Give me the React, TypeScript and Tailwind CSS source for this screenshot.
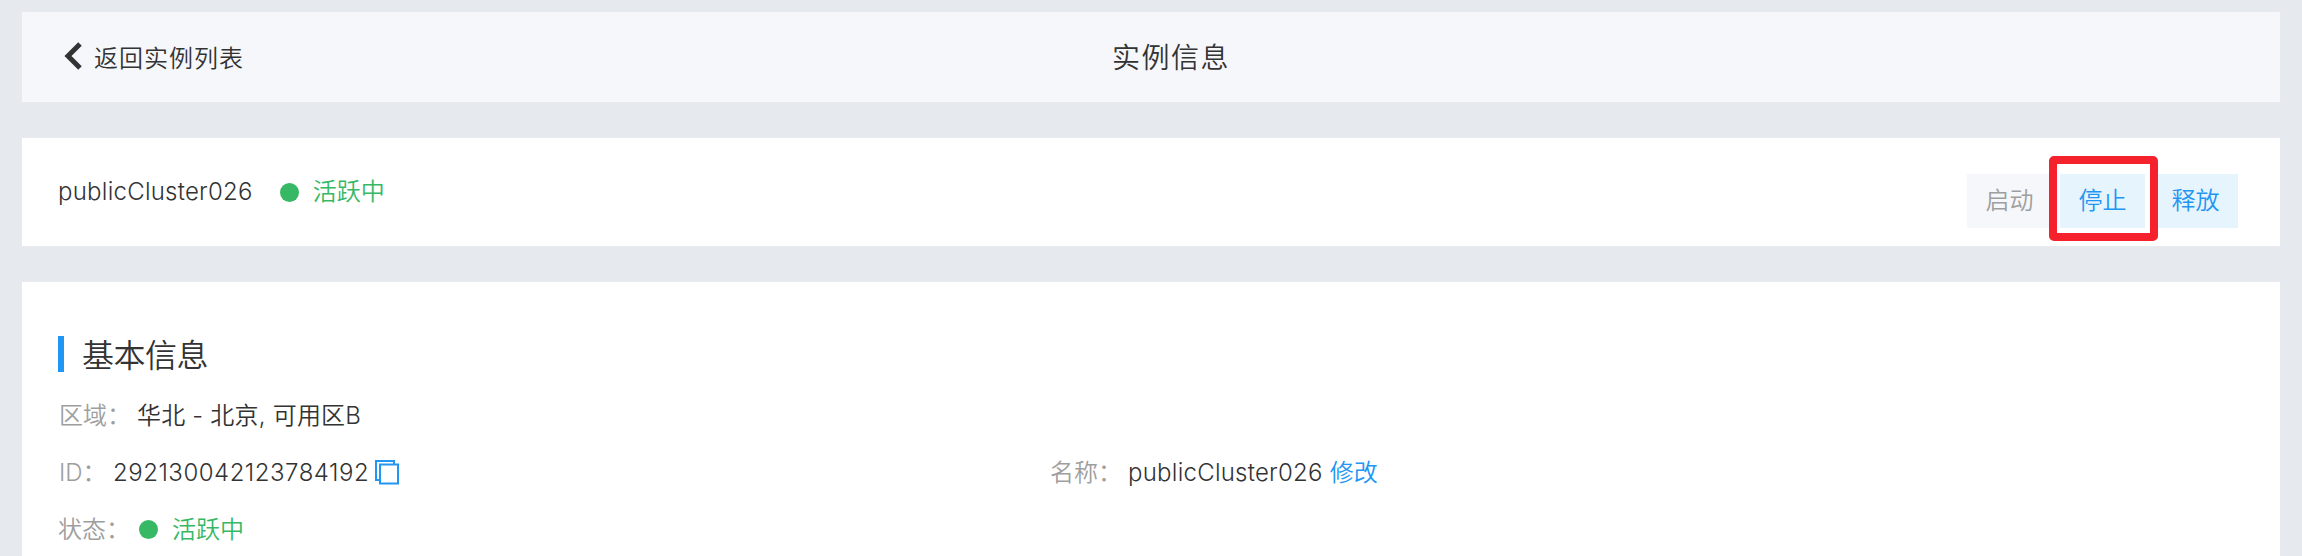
import React from "react";

const font = "font-['Inter','Noto_Sans_CJK_SC',sans-serif]";

function StatusDot() {
  return (
    <span className="inline-flex items-center gap-[14px] text-[24px] text-[#36b864]">
      <span className="w-[19px] h-[19px] rounded-full bg-[#36b864]" />
      活跃中
    </span>
  );
}

function CopyIcon() {
  return (
    <svg width="24" height="25" viewBox="0 0 24 25" fill="none" stroke="#2196f3" strokeWidth="2">
      <path d="M5 20H1V1h18v3" />
      <rect x="5" y="4.5" width="18" height="19" />
    </svg>
  );
}

export default function App() {
  return (
    <div className={`${font} w-[2302px] h-[556px] overflow-hidden bg-[#e6e9ee] px-[22px] pt-[12px] text-[#333333] font-[350]`}>
      {/* 顶部栏 */}
      <div className="relative h-[90px] bg-[#f5f7fb] flex items-center pl-[41px]">
        <svg width="20" height="30" viewBox="0 0 20 30" fill="none" stroke="#333333" strokeWidth="5" className="mt-[-3px]">
          <path d="M17 3 5 15l12 12" />
        </svg>
        <span className="ml-[11px] mt-[3px] text-[24px] tracking-[1px]">返回实例列表</span>
        <span className="absolute left-[1090px] top-[25px] text-[28px] tracking-[1.5px]">实例信息</span>
      </div>

      {/* 实例状态 */}
      <div className="mt-[36px] h-[108px] bg-white flex pl-[37px] pr-[44px]">
        <div className="flex items-center h-[108px] gap-[27px]">
          <span className="text-[24px] tracking-[0.25px] ml-[-1px]">publicCluster026</span>
          <StatusDot />
        </div>
        <div className="ml-auto mt-[36px] mr-[-2px] flex gap-[8px] h-[54px] text-[24px] relative">
          <button className="w-[85px] bg-[#f5f7fb] text-[#9e9e9e]">启动</button>
          <button className="w-[85px] bg-[#e6f4fe] text-[#2196f3]">停止</button>
          <button className="w-[85px] bg-[#e6f4fe] text-[#2196f3]">释放</button>
          <div className="absolute left-[82px] top-[-18px] w-[109px] h-[85px] border-[8px] border-[#f5222d] rounded-[5px]" />
        </div>
      </div>

      {/* 基本信息 */}
      <div className="mt-[36px] bg-white h-[300px] pl-[36px] pt-[54px]">
        <div className="flex items-center h-[36px] border-l-[6px] border-[#2196f3] pl-[18px] text-[32px] tracking-[-0.5px]">
          <span className="mt-[3px]">基本信息</span>
        </div>
        <div className="mt-[15px] grid grid-cols-[992px_1fr] auto-rows-[57px] items-center text-[24px]">
          <div className="col-span-2 flex items-center">
            <span className="text-[#9e9e9e] w-[79px] pl-[1px]">区域：</span>
            <span className="tracking-[0.2px]">华北 - 北京, 可用区B</span>
          </div>
          <div className="flex items-center">
            <span className="text-[#9e9e9e] w-[55px] pl-[1px]">ID：</span>
            <span className="tracking-[0.5px]">292130042123784192</span>
            <span className="ml-[6px]"><CopyIcon /></span>
          </div>
          <div className="flex items-center">
            <span className="text-[#9e9e9e] w-[78px]">名称：</span>
            <span className="tracking-[0.25px]">publicCluster026</span>
            <span className="ml-[7px] text-[#2196f3]">修改</span>
          </div>
          <div className="col-span-2 flex items-center">
            <span className="text-[#9e9e9e] w-[81px]">状态：</span>
            <StatusDot />
          </div>
        </div>
      </div>
    </div>
  );
}
